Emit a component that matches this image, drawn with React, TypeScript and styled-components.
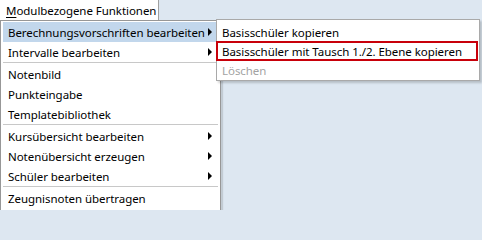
import React from "react";
import styled, { createGlobalStyle } from "styled-components";

const GlobalStyle = createGlobalStyle`
  html, body {
    margin: 0;
    padding: 0;
    background: #dde7f1;
  }
  body {
    font-family: "Noto Sans", "Open Sans", sans-serif;
    font-size: 11.5px;
    color: #000;
  }
`;

const Screen = styled.div`
  position: relative;
  width: 482px;
  height: 210px;
  overflow: hidden;
  background: #dde7f1;
`;

const MenuBar = styled.div`
  display: flex;
  height: 20px;
`;

const MenuTitle = styled.div`
  display: flex;
  align-items: center;
  width: 159px;
  box-sizing: border-box;
  padding-left: 6px;
  background: #fff;
  border-right: 1px solid #a0a0a0;
  white-space: nowrap;
  letter-spacing: -0.05px;

  u {
    text-decoration: underline;
    text-underline-offset: 2px;
  }
`;

const Dropdown = styled.div`
  position: absolute;
  top: 20px;
  left: 0;
  width: 221px;
  height: 200px;
  box-sizing: border-box;
  padding: 1px 2px;
  background: #fff;
  border: 1px solid #979797;
  box-shadow: 2px 2px 1px rgba(0, 0, 0, 0.12);
`;

const SubMenu = styled.div`
  position: absolute;
  top: 19px;
  left: 216px;
  width: 264px;
  box-sizing: border-box;
  padding: 2px 0 0 0;
  background: #fff;
  border: 1px solid #a9a9a9;
  box-shadow: 2px 2px 2px rgba(0, 0, 0, 0.18);
`;

const Item = styled.div<{ $active?: boolean; $disabled?: boolean; $marked?: boolean }>`
  position: relative;
  display: flex;
  align-items: center;
  justify-content: space-between;
  height: 20px;
  box-sizing: border-box;
  padding: 0 4px 0 ${(p) => (p.$marked ? "4px" : "5px")};
  background: ${(p) => (p.$active ? "#c2d7ec" : "transparent")};
  color: ${(p) => (p.$disabled ? "#a3a3a3" : "#000")};
  border: ${(p) => (p.$marked ? "2px solid #c8000a" : "none")};
  margin: ${(p) => (p.$marked ? "-1px 1px -1px -1px" : "0")};
  white-space: nowrap;
  letter-spacing: -0.05px;
`;

const Arrow = styled.span`
  width: 0;
  height: 0;
  border-top: 4px solid transparent;
  border-bottom: 4px solid transparent;
  border-left: 4px solid #000;
  margin-right: 2px;
`;

const Separator = styled.div`
  height: 1px;
  margin: 0 0 1px 0;
  background: #c8c8c8;
`;

type Entry = { label: string; sub?: boolean; active?: boolean } | "sep";

const mainEntries: Entry[] = [
  { label: "Berechnungsvorschriften bearbeiten", sub: true, active: true },
  { label: "Intervalle bearbeiten", sub: true },
  "sep",
  { label: "Notenbild" },
  { label: "Punkteingabe" },
  { label: "Templatebibliothek" },
  "sep",
  { label: "Kursübersicht bearbeiten", sub: true },
  { label: "Notenübersicht erzeugen", sub: true },
  { label: "Schüler bearbeiten", sub: true },
  "sep",
  { label: "Zeugnisnoten übertragen" },
];

const App: React.FC = () => {
  return (
    <>
      <GlobalStyle />
      <Screen>
        <MenuBar>
          <MenuTitle>
            <span>
              <u>M</u>odulbezogene Funktionen
            </span>
          </MenuTitle>
        </MenuBar>

        <Dropdown>
          {mainEntries.map((entry, i) =>
            entry === "sep" ? (
              <Separator key={i} />
            ) : (
              <Item key={i} $active={entry.active}>
                <span>{entry.label}</span>
                {entry.sub && <Arrow />}
              </Item>
            )
          )}
        </Dropdown>

        <SubMenu>
          <Item>Basisschüler kopieren</Item>
          <Item $marked>Basisschüler mit Tausch 1./2. Ebene kopieren</Item>
          <Item $disabled>Löschen</Item>
        </SubMenu>
      </Screen>
    </>
  );
};

export default App;
